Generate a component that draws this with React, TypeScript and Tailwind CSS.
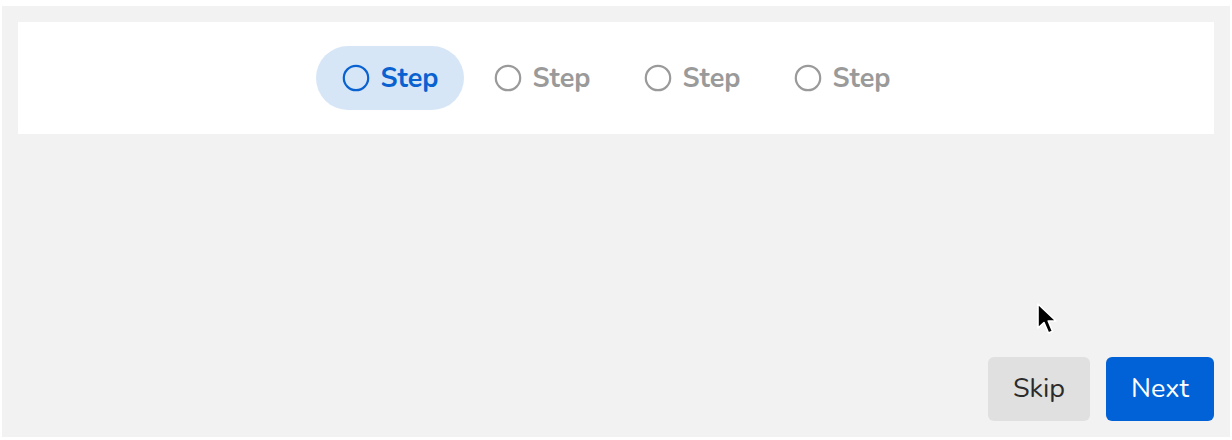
const STEPS = ["Step", "Step", "Step", "Step"];

function StepItem({ label, active }: { label: string; active: boolean }) {
  return (
    <div
      className={[
        "flex h-16 w-[148px] items-center justify-center gap-[11px] rounded-full",
        active ? "mr-[2px] bg-[#d7e6f7] text-[#0a62d0]" : "text-[#9a9a9a]",
      ].join(" ")}
    >
      <svg width="28" height="28" viewBox="0 0 28 28" fill="none">
        <circle cx="14" cy="14" r="12.2" stroke="currentColor" strokeWidth="2.2" />
      </svg>
      <span className="text-[27px] font-bold leading-none">{label}</span>
    </div>
  );
}

function Cursor() {
  return (
    <svg
      className="pointer-events-none absolute left-[1036px] top-[302px]"
      width="24"
      height="36"
      viewBox="0 0 24 36"
    >
      <path
        d="M2 2 L2 26 L8 20.5 L12.5 31 L16.5 29.3 L12.2 19 L20 19 Z"
        fill="#000"
        stroke="#fff"
        strokeWidth="1.6"
        strokeLinejoin="round"
      />
    </svg>
  );
}

export default function App() {
  return (
    <div
      className="relative h-[440px] w-[1232px] bg-white pl-[2px] pt-[6px]"
      style={{ fontFamily: "Nunito, Lato, 'Open Sans', sans-serif" }}
    >
      <div className="flex h-[431px] w-[1228px] flex-col bg-[#f2f2f2] p-4">
        <div className="flex h-[112px] items-center justify-center gap-[2px] bg-white">
          {STEPS.map((s, i) => (
            <StepItem key={i} label={s} active={i === 0} />
          ))}
        </div>
        <div className="flex-1" />
        <div className="flex justify-end gap-4">
          <button className="h-16 w-[102px] rounded-md bg-[#e0e0e0] text-[27px] text-[#2b2b2b]">
            Skip
          </button>
          <button className="h-16 w-[108px] rounded-md bg-[#0062d6] text-[27px] text-white">
            Next
          </button>
        </div>
      </div>
      <Cursor />
    </div>
  );
}
